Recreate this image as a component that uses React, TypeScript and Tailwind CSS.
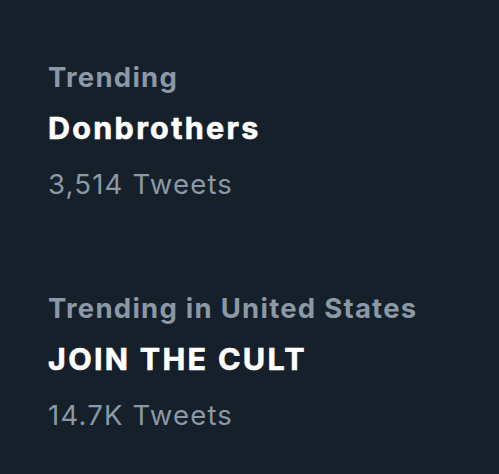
import React from "react";

const trends = [
  { context: "Trending", name: "Donbrothers", count: "3,514 Tweets" },
  { context: "Trending in United States", name: "JOIN THE CULT", count: "14.7K Tweets" },
];

const TrendItem = ({
  context,
  name,
  count,
}: {
  context: string;
  name: string;
  count: string;
}) => (
  <div className="flex flex-col">
    <p className="text-[27.5px] leading-[36px] font-bold tracking-[1.25px] text-[#8b98a5]">
      {context}
    </p>
    <p className="mt-[13px] text-[30.5px] leading-[40px] font-bold tracking-[2.3px] text-white [-webkit-text-stroke:0.6px_white]">
      {name}
    </p>
    <p className="mt-[18px] text-[27.5px] leading-[36px] tracking-[1.2px] text-[#8b98a5]">
      {count}
    </p>
  </div>
);

export default function App() {
  return (
    <div
      className="flex h-[474px] w-[499px] flex-col gap-[88px] bg-[#15202b] pt-[59px] pl-[48px]"
      style={{ fontFamily: "Inter, 'Liberation Sans', sans-serif" }}
    >
      {trends.map((t) => (
        <TrendItem key={t.name} {...t} />
      ))}
    </div>
  );
}
